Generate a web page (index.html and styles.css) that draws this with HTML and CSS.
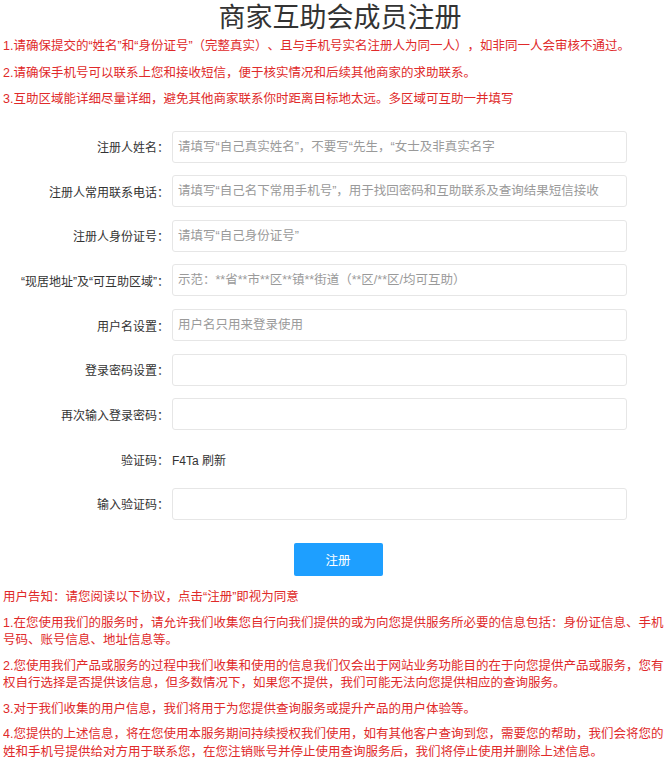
FILE: index.html
```
<!DOCTYPE html>
<html>
<head>
  <meta charset="utf-8">
  <title>商家互助会成员注册</title>
  <link rel="stylesheet" href="styles.css">
</head>
<body>
  <h1 class="title">商家互助会成员注册</h1>
  <div class="notes">
    <p>1.请确保提交的“姓名”和“身份证号”（完整真实）、且与手机号实名注册人为同一人），如非同一人会审核不通过。</p>
    <p>2.请确保手机号可以联系上您和接收短信，便于核实情况和后续其他商家的求助联系。</p>
    <p>3.互助区域能详细尽量详细，避免其他商家联系你时距离目标地太远。多区域可互助一并填写</p>
  </div>
  <form class="reg-form" onsubmit="return false">
    <div class="row">
      <label class="row-label">注册人姓名：</label>
      <input class="row-input" type="text" placeholder="请填写“自己真实姓名”，不要写“先生，“女士及非真实名字">
    </div>
    <div class="row">
      <label class="row-label">注册人常用联系电话：</label>
      <input class="row-input" type="text" placeholder="请填写“自己名下常用手机号”，用于找回密码和互助联系及查询结果短信接收">
    </div>
    <div class="row">
      <label class="row-label">注册人身份证号：</label>
      <input class="row-input" type="text" placeholder="请填写“自己身份证号”">
    </div>
    <div class="row">
      <label class="row-label">“现居地址”及“可互助区域”：</label>
      <input class="row-input" type="text" placeholder="示范：**省**市**区**镇**街道（**区/**区/均可互助）">
    </div>
    <div class="row">
      <label class="row-label">用户名设置：</label>
      <input class="row-input" type="text" placeholder="用户名只用来登录使用">
    </div>
    <div class="row">
      <label class="row-label">登录密码设置：</label>
      <input class="row-input" type="password">
    </div>
    <div class="row">
      <label class="row-label">再次输入登录密码：</label>
      <input class="row-input" type="password">
    </div>
    <div class="row">
      <label class="row-label">验证码：</label>
      <span class="captcha">F4Ta 刷新</span>
    </div>
    <div class="row">
      <label class="row-label">输入验证码：</label>
      <input class="row-input" type="text">
    </div>
    <div class="btn-row">
      <button class="btn" type="submit">注册</button>
    </div>
  </form>
  <div class="agreement">
    <p>用户告知：请您阅读以下协议，点击“注册”即视为同意</p>
    <p>1.在您使用我们的服务时，请允许我们收集您自行向我们提供的或为向您提供服务所必要的信息包括：身份证信息、手机号码、账号信息、地址信息等。</p>
    <p>2.您使用我们产品或服务的过程中我们收集和使用的信息我们仅会出于网站业务功能目的在于向您提供产品或服务，您有权自行选择是否提供该信息，但多数情况下，如果您不提供，我们可能无法向您提供相应的查询服务。</p>
    <p>3.对于我们收集的用户信息，我们将用于为您提供查询服务或提升产品的用户体验等。</p>
    <p>4.您提供的上述信息，将在您使用本服务期间持续授权我们使用，如有其他客户查询到您，需要您的帮助，我们会将您的姓和手机号提供给对方用于联系您，在您注销账号并停止使用查询服务后，我们将停止使用并删除上述信息。</p>
  </div>
</body>
</html>
```

FILE: styles.css
```
body {
  margin: 0 0 0 3px;
  background-color: #fff;
  color: #333;
  font-family: "Liberation Sans", "Noto Sans CJK SC", sans-serif;
  font-size: 12.5px;
  text-spacing-trim: space-all;
}
.title {
  margin: 0;
  padding-left: 12px;
  font-size: 27px;
  font-weight: 400;
  line-height: 36px;
  text-align: center;
  color: #333;
}
.notes {
  margin-top: 2px;
  color: #e02a2a;
}
.notes p {
  margin: 0 0 9px;
  line-height: 17.5px;
}
.reg-form {
  padding: 13px 38px 0 0;
}
.row {
  display: flex;
  align-items: center;
  height: 32px;
  margin-bottom: 12.67px;
}
.row-label {
  width: 166px;
  flex-shrink: 0;
  text-align: right;
  white-space: nowrap;
  font-size: 12px;
  color: #333;
}
.row-input {
  flex: 1;
  height: 32px;
  margin-left: 3px;
  padding: 0 5px;
  box-sizing: border-box;
  border: 1px solid #e6e6e6;
  border-radius: 3px;
  font-family: inherit;
  font-size: 12.5px;
  color: #333;
  outline: none;
}
.row-input::placeholder {
  color: #9a9a9a;
}
.captcha {
  margin-left: 3px;
  font-size: 12px;
  color: #333;
}
.btn-row {
  padding: 11px 0 0 46px;
  text-align: center;
}
.btn {
  width: 89px;
  height: 33px;
  border: none;
  border-radius: 2px;
  background-color: #1e9fff;
  color: #fff;
  font-family: inherit;
  font-size: 12.5px;
  cursor: pointer;
}
.agreement {
  margin-top: 13px;
  color: #e02a2a;
}
.agreement p {
  margin: 0 0 8px;
  line-height: 17.5px;
}
```
